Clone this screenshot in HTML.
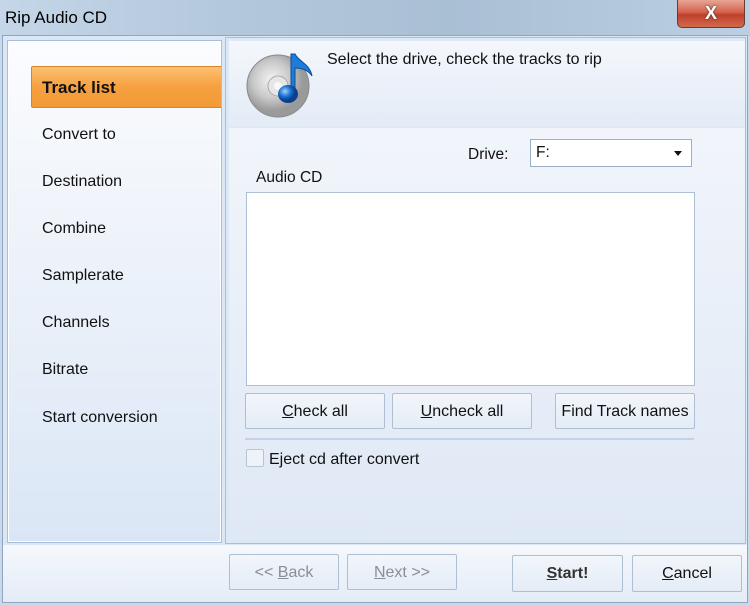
<!DOCTYPE html>
<html><head><style>
*{margin:0;padding:0;box-sizing:border-box}
body{width:750px;height:605px;overflow:hidden;position:relative;font-family:"Liberation Sans",sans-serif;font-size:15px;color:#111;background:#c9d9ea}
.a{position:absolute}
.title{left:0;top:0;width:750px;height:36px;background:linear-gradient(90deg,#c4d6e8,#b4c8dc 30%,#a9bfd4 60%,#bccfe2);}
.btn{position:absolute;border:1px solid #aebfd3;border-radius:2px;background:linear-gradient(#f2f6fb,#e4ecf6);text-align:center;line-height:36px;font-size:16px}
.dis{color:#8a8f96}
.nav{position:absolute;left:42px;font-size:16px}
u{text-decoration:underline}
</style></head><body>
<div class="a title"></div>
<div class="a" style="left:5px;top:8px;font-size:17px;color:#000">Rip Audio CD</div>
<div class="a" style="left:677px;top:0;width:68px;height:28px;border:1px solid #6b3a30;border-top:none;border-radius:0 0 5px 5px;background:linear-gradient(#e8a596,#d4634c 45%,#c0402a 55%,#d06a4f);color:#fff;font-weight:bold;font-size:18px;text-align:center;line-height:26px;text-shadow:0 0 2px #333">X</div>
<div class="a" style="left:2px;top:35px;width:746px;height:568px;background:#dce7f5;border:1px solid #8fa6c0"></div>
<div class="a" style="left:7px;top:40px;width:215px;height:503px;border:1px solid #a9bfd8;background:linear-gradient(#fbfcfe,#eef3fa 40%,#dae6f6);box-shadow:inset 0 0 0 1px #fff"></div>
<div class="a" style="left:31px;top:66px;width:190px;height:42px;border:1px solid #d4862a;border-right:none;border-radius:2px 0 0 2px;background:linear-gradient(#fcc070,#f6a040 50%,#f29a36);"></div>
<div class="nav" style="top:78px;font-weight:bold;font-size:17px">Track list</div>
<div class="nav" style="top:126px">Convert to</div>
<div class="nav" style="top:173px">Destination</div>
<div class="nav" style="top:220px">Combine</div>
<div class="nav" style="top:267px">Samplerate</div>
<div class="nav" style="top:314px">Channels</div>
<div class="nav" style="top:361px">Bitrate</div>
<div class="nav" style="top:409px">Start conversion</div>
<div class="a" style="left:225px;top:37px;width:521px;height:507px;border:1px solid #a9bfd8;background:#dde8f6"></div>
<div class="a" style="left:229px;top:41px;width:516px;height:86px;background:linear-gradient(#f4f7fc,#e3ebf6)"></div>
<div class="a" style="left:229px;top:128px;width:516px;height:412px;background:linear-gradient(#f1f5fb,#dfe8f5)"></div>
<svg class="a" style="left:244px;top:48px" width="74" height="72" viewBox="0 0 74 72">
<defs><radialGradient id="g" cx="40%" cy="40%"><stop offset="0" stop-color="#f4f4f4"/><stop offset="0.6" stop-color="#c9c9c9"/><stop offset="1" stop-color="#9a9a9a"/></radialGradient>
<radialGradient id="b" cx="35%" cy="35%"><stop offset="0" stop-color="#9fd4ff"/><stop offset="0.6" stop-color="#1a6fd0"/><stop offset="1" stop-color="#0a3f8a"/></radialGradient></defs>
<circle cx="34" cy="38" r="31" fill="url(#g)" stroke="#888" stroke-width="1"/>
<circle cx="34" cy="38" r="10" fill="#e6e6e6" stroke="#aaa"/>
<circle cx="34" cy="38" r="4" fill="#f8f8f8"/>
<path d="M47 6 L51 6 C55 14 66 16 68 28 C64 22 58 20 51 20 L51 46 L47 46 Z" fill="#1f7bd8" stroke="#0b4f9a" stroke-width="1"/>
<ellipse cx="44" cy="46" rx="10" ry="9" fill="url(#b)"/>
</svg>
<div class="a" style="left:327px;top:51px;font-size:16px">Select the drive, check the tracks to rip</div>
<div class="a" style="left:468px;top:146px;font-size:15.5px">Drive:</div>
<div class="a" style="left:530px;top:139px;width:162px;height:28px;border:1px solid #9ab0c8;background:#fff;padding-left:5px;line-height:26px;font-size:15.5px">F:<span style="position:absolute;right:9px;top:11px;border-left:4px solid transparent;border-right:4px solid transparent;border-top:5px solid #111"></span></div>
<div class="a" style="left:256px;top:169px;font-size:15.5px">Audio CD</div>
<div class="a" style="left:246px;top:192px;width:449px;height:194px;border:1px solid #aebfd3;background:#fff"></div>
<div class="btn" style="left:245px;top:393px;width:140px;height:36px"><u>C</u>heck all</div>
<div class="btn" style="left:392px;top:393px;width:140px;height:36px"><u>U</u>ncheck all</div>
<div class="btn" style="left:555px;top:393px;width:140px;height:36px">Find Track names</div>
<div class="a" style="left:245px;top:438px;width:449px;height:2px;background:#c3d3e6"></div>
<div class="a" style="left:246px;top:449px;width:18px;height:18px;border:1px solid #b6c5d6;border-radius:2px;background:#eef3f9"></div>
<div class="a" style="left:269px;top:451px;font-size:16px">Eject cd after convert</div>
<div class="a" style="left:3px;top:545px;width:744px;height:57px;background:linear-gradient(#f5f8fc,#e4ecf6)"></div>
<div class="btn dis" style="left:229px;top:554px;width:110px;height:36px">&lt;&lt; <u>B</u>ack</div>
<div class="btn dis" style="left:347px;top:554px;width:110px;height:36px"><u>N</u>ext &gt;&gt;</div>
<div class="btn" style="left:512px;top:555px;width:111px;height:37px;font-weight:bold;color:#333"><u>S</u>tart!</div>
<div class="btn" style="left:632px;top:555px;width:110px;height:37px"><u>C</u>ancel</div>
</body></html>
